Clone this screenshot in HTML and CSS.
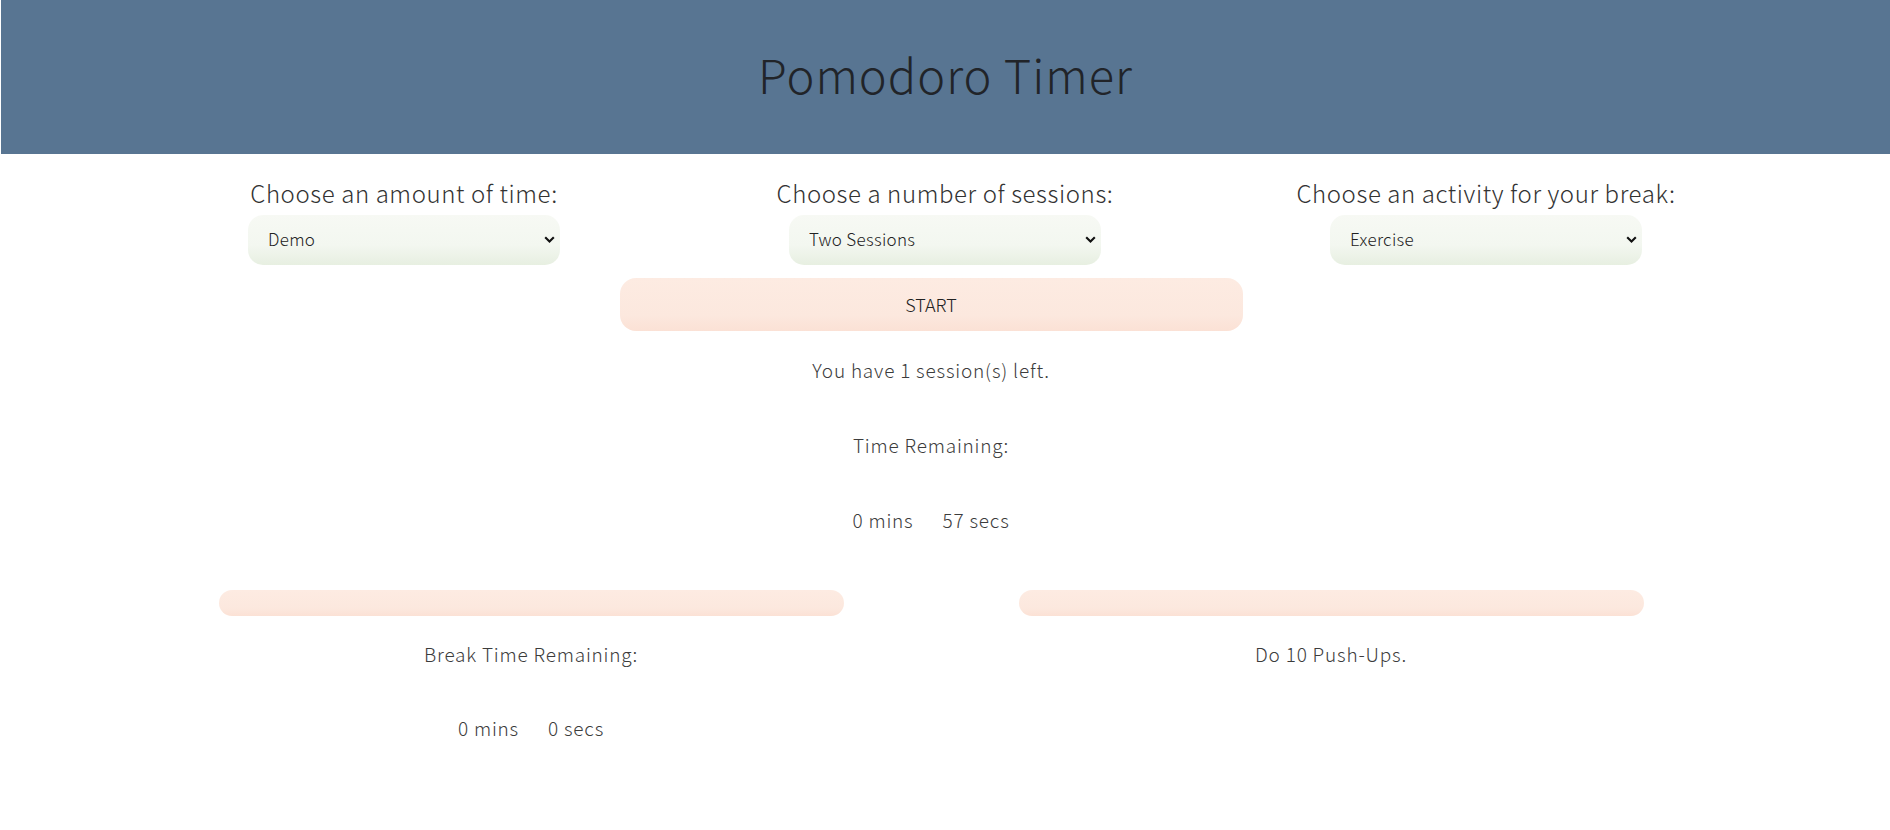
FILE: index.html
```html
<!DOCTYPE html>
<html lang="en">
<head>
<meta charset="utf-8">
<title>Pomodoro Timer</title>
<link rel="stylesheet" href="styles.css">
</head>
<body>
<header class="site-header">
  <h1 class="title">Pomodoro Timer</h1>
</header>

<section class="options">
  <div class="option">
    <label class="option-label" for="time">Choose an amount of time:</label>
    <div class="select-wrap">
      <select id="time" class="select"><option>Demo</option></select>
      <svg class="chevron" viewBox="0 0 11 7" width="11" height="7"><path d="M1.2 1.2l4.3 4.3 4.3-4.3" fill="none" stroke="#111" stroke-width="2.1"/></svg>
    </div>
  </div>
  <div class="option">
    <label class="option-label" for="sessions">Choose a number of sessions:</label>
    <div class="select-wrap">
      <select id="sessions" class="select"><option>Two Sessions</option></select>
      <svg class="chevron" viewBox="0 0 11 7" width="11" height="7"><path d="M1.2 1.2l4.3 4.3 4.3-4.3" fill="none" stroke="#111" stroke-width="2.1"/></svg>
    </div>
  </div>
  <div class="option">
    <label class="option-label" for="activity">Choose an activity for your break:</label>
    <div class="select-wrap">
      <select id="activity" class="select"><option>Exercise</option></select>
      <svg class="chevron" viewBox="0 0 11 7" width="11" height="7"><path d="M1.2 1.2l4.3 4.3 4.3-4.3" fill="none" stroke="#111" stroke-width="2.1"/></svg>
    </div>
  </div>
</section>

<main class="main">
  <div class="center">
    <button class="start-btn">START</button>
    <p class="line">You have 1 session(s) left.</p>
    <p class="line">Time Remaining:</p>
    <p class="line"><span class="mins">0 mins</span><span>57 secs</span></p>
  </div>
  <div class="break-row">
    <div class="break-col">
      <div class="bar"></div>
      <p class="line">Break Time Remaining:</p>
      <p class="line"><span class="mins">0 mins</span><span>0 secs</span></p>
    </div>
    <div class="break-col">
      <div class="bar"></div>
      <p class="line">Do 10 Push-Ups.</p>
    </div>
  </div>
</main>
</body>
</html>
```

FILE: styles.css
```css
html, body {
  margin: 0;
  padding: 0;
  background: #ffffff;
}
body {
  font-family: "Noto Sans CJK JP", "Noto Sans", sans-serif;
  color: #444;
}
.site-header {
  height: 154px;
  margin-left: 1px;
  background: #587592;
  display: flex;
  align-items: center;
  justify-content: center;
}
.title {
  margin: 0 0 6px 0;
  font-size: 47px;
  font-weight: 300;
  color: #212429;
  letter-spacing: 1px;
  line-height: 1.2;
}
.options {
  width: 1623px;
  margin: 0 auto;
  display: grid;
  grid-template-columns: repeat(3, 1fr);
  padding-top: 21px;
}
.option {
  display: flex;
  flex-direction: column;
  align-items: center;
}
.option-label {
  font-size: 24px;
  font-weight: 300;
  line-height: 36px;
  color: #333;
  letter-spacing: 0.6px;
}
.select-wrap {
  position: relative;
  width: 312px;
  height: 50px;
  margin-top: 4px;
}
.select {
  appearance: none;
  -webkit-appearance: none;
  width: 100%;
  height: 100%;
  border: none;
  border-radius: 15px;
  background: linear-gradient(to bottom, #f7f9f4 0%, #f3f7f0 60%, #e7efe1 100%);
  font-family: inherit;
  font-size: 17px;
  font-weight: 300;
  color: #222;
  letter-spacing: 0.3px;
  padding: 0 0 3px 20px;
  outline: none;
}
.chevron {
  position: absolute;
  right: 5px;
  top: 21px;
  pointer-events: none;
}
.main {
  width: 1600px;
  margin-left: 131px;
}
.center {
  display: flex;
  flex-direction: column;
  align-items: center;
  padding-top: 13px;
}
.start-btn {
  width: 623px;
  height: 53px;
  border: none;
  border-radius: 16px;
  background: linear-gradient(to bottom, #fdebe2 0%, #fce8de 70%, #fbe1d5 100%);
  font-family: inherit;
  font-size: 18px;
  font-weight: 300;
  color: #222;
  padding-bottom: 3px;
  cursor: pointer;
}
.line {
  margin: 0;
  font-size: 19px;
  font-weight: 300;
  letter-spacing: 0.8px;
  line-height: 28px;
  text-align: center;
  color: #3c3c3c;
}
.center .line:nth-of-type(1) { margin-top: 25px; }
.center .line:nth-of-type(2) { margin-top: 47px; }
.center .line:nth-of-type(3) { margin-top: 47px; }
.mins {
  margin-right: 29px;
}
.break-row {
  display: grid;
  grid-template-columns: 1fr 1fr;
  margin-top: 56px;
}
.break-col {
  display: flex;
  flex-direction: column;
  align-items: center;
}
.bar {
  width: 625px;
  height: 26px;
  border-radius: 13px;
  background: linear-gradient(to bottom, #fdebe2 0%, #fce8de 70%, #fbe1d5 100%);
}
.break-col .line:nth-of-type(1) { margin-top: 24px; }
.break-col .line:nth-of-type(2) { margin-top: 46px; }
```
